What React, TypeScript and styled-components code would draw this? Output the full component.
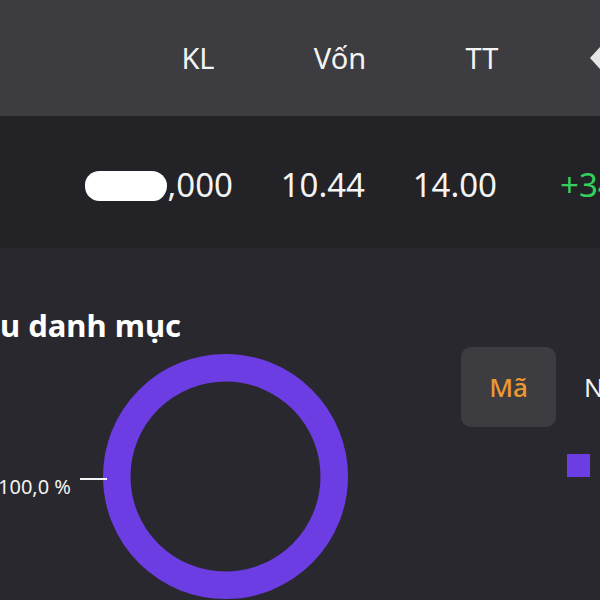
import React from "react";
import styled, { createGlobalStyle } from "styled-components";

const Global = createGlobalStyle`
  html, body { margin: 0; padding: 0; background: #29282e; }
  body { font-family: "Noto Sans", "Open Sans", sans-serif; overflow: hidden; }
`;

const Screen = styled.div`
  width: 600px;
  height: 600px;
  overflow: hidden;
  background: #29282e;
  display: flex;
  flex-direction: column;
  color: #f2f2f2;
`;

const Header = styled.div`
  height: 116px;
  flex: none;
  background: #3d3c41;
  display: grid;
  grid-template-columns: 127px 142px 142px 142px 1fr;
  align-items: center;
`;

const HeadCell = styled.div`
  text-align: center;
  font-size: 29px;
  color: #f4f4f4;
  line-height: 1;
  padding-bottom: 2px;
`;

const SortCell = styled.div`
  display: flex;
  padding-left: 34px;
  align-items: center;
`;

const DataRow = styled.div`
  height: 132px;
  flex: none;
  background: #232226;
  display: grid;
  grid-template-columns: 233px 132px 132px 1fr;
  align-items: center;
`;

const NumCell = styled.div<{ $tone?: "up" }>`
  display: flex;
  align-items: center;
  justify-content: ${(p) => (p.$tone === "up" ? "flex-start" : "flex-end")};
  padding-left: ${(p) => (p.$tone === "up" ? "63px" : "0")};
  font-size: 33px;
  line-height: 1;
  white-space: nowrap;
  color: ${(p) => (p.$tone === "up" ? "#33d15b" : "#f4f4f4")};
  padding-top: 5px;
`;

const Masked = styled.span`
  display: inline-block;
  width: 82px;
  height: 30px;
  background: #ffffff;
  border-radius: 15px 16px 14px 15px / 14px 15px 16px 15px;
  margin-top: 2px;
  margin-right: 1px;
`;

const Section = styled.div`
  display: flex;
  flex-direction: column;
  padding-top: 59px;
`;

const Title = styled.div`
  font-size: 31px;
  font-weight: 700;
  line-height: 36px;
  color: #ffffff;
  white-space: nowrap;
`;

const ChartRow = styled.div`
  display: flex;
  align-items: flex-start;
`;

const ChartSvg = styled.svg`
  flex: none;
  display: block;
`;

const Legend = styled.div`
  display: flex;
  flex-direction: column;
  padding-left: 21px;
  padding-top: 4px;
`;

const LegendHead = styled.div`
  display: flex;
  align-items: center;
  gap: 28px;
`;

const TabButton = styled.div<{ $active?: boolean }>`
  width: 95px;
  height: 80px;
  border-radius: 10px;
  background: ${(p) => (p.$active ? "#3d3c41" : "transparent")};
  color: ${(p) => (p.$active ? "#ec9a30" : "#f4f4f4")};
  display: flex;
  align-items: center;
  justify-content: center;
  font-size: 26px;
  font-weight: 500;
`;

const TabText = styled.div`
  font-size: 26px;
  color: #f4f4f4;
  white-space: nowrap;
`;

const Swatch = styled.div<{ $color: string }>`
  width: 23px;
  height: 23px;
  background: ${(p) => p.$color};
  margin-left: 106px;
  margin-top: 27px;
`;

export default function App() {
  const cx = 225.5;
  const cy = 133.5;
  return (
    <>
      <Global />
      <Screen>
        <Header>
          <span />
          <HeadCell>KL</HeadCell>
          <HeadCell>Vốn</HeadCell>
          <HeadCell>TT</HeadCell>
          <SortCell>
            <svg width="30" height="32" viewBox="0 0 30 32">
              <path d="M3 16 L14 4 Q16 2 18 4 L28 16 L18 28 Q16 30 14 28 Z" fill="#e6e6e6" />
            </svg>
          </SortCell>
        </Header>
        <DataRow>
          <NumCell>
            <Masked />,000
          </NumCell>
          <NumCell>10.44</NumCell>
          <NumCell>14.00</NumCell>
          <NumCell $tone="up">+34</NumCell>
        </DataRow>
        <Section>
          <Title>u danh mục</Title>
          <ChartRow>
            <ChartSvg width="440" height="257" viewBox="0 0 440 257">
              <circle cx={cx} cy={cy} r={108.75} fill="none" stroke="#6c3de2" strokeWidth={27.5} />
              <line x1="80" y1="136" x2="107" y2="136" stroke="#f4f4f4" strokeWidth="2" />
              <text
                x="-2"
                y="151"
                fill="#f2f2f2"
                fontSize="20"
                fontFamily="'Noto Sans', sans-serif"
              >
                100,0 %
              </text>
            </ChartSvg>
            <Legend>
              <LegendHead>
                <TabButton $active>Mã</TabButton>
                <TabText>Ngành</TabText>
              </LegendHead>
              <Swatch $color="#6c3de2" />
            </Legend>
          </ChartRow>
        </Section>
      </Screen>
    </>
  );
}
